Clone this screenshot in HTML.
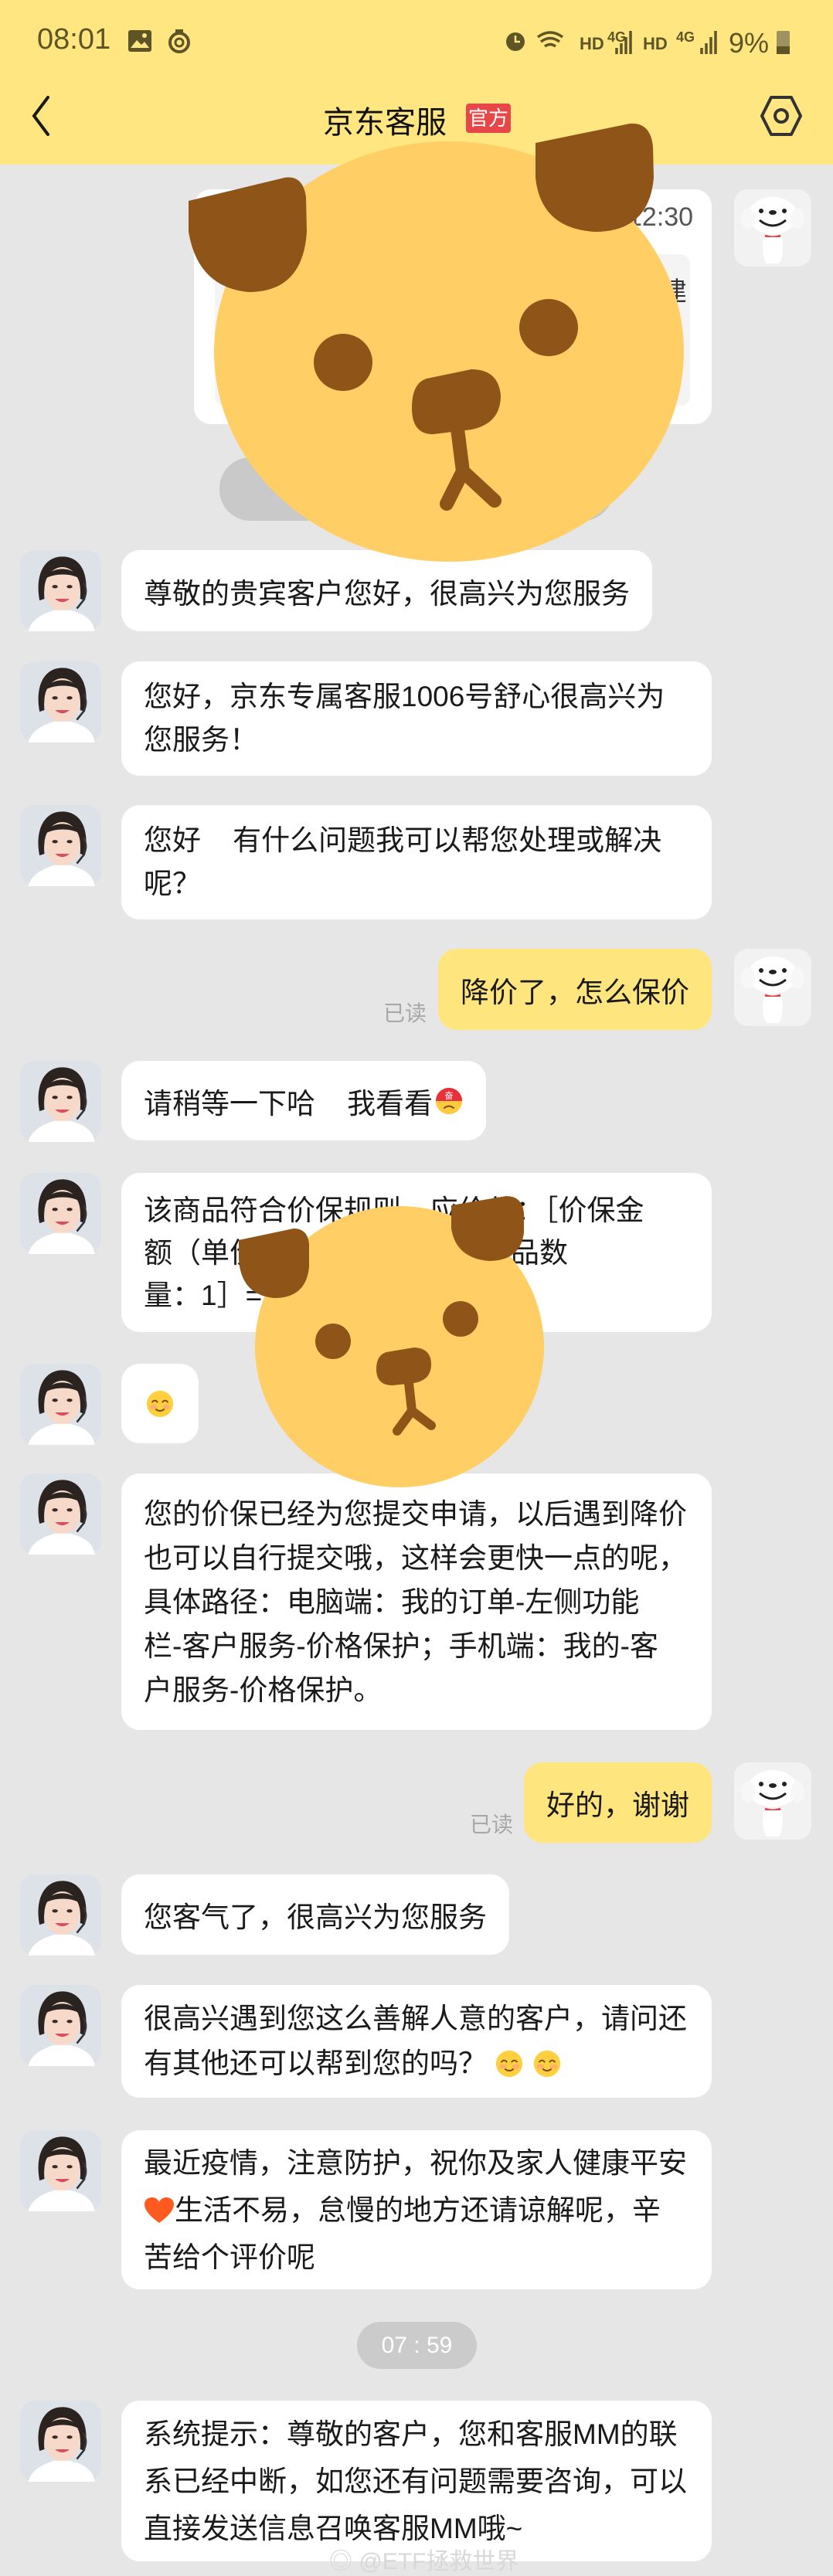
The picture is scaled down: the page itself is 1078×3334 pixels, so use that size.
<!DOCTYPE html>
<html><head><meta charset="utf-8">
<style>
*{margin:0;padding:0;box-sizing:border-box}
body{width:1078px;height:3334px;background:#e6e6e6;position:relative;overflow:hidden;font-family:"Liberation Sans","Noto Sans CJK SC",sans-serif;color:#1a1a1a}
.hdr{position:absolute;left:0;top:0;width:1078px;height:213px;background:#ffe680}
.ab{position:absolute}
.b{position:absolute;background:#fff;border-radius:24px;font-size:37px;padding:0 29px;white-space:pre;display:flex;align-items:center}
.b span{display:block}
.r{background:#ffe57e}
.av{position:absolute;left:26px;width:105px;height:105px}
.jd{position:absolute;left:950px;width:100px;height:100px}
.rd{position:absolute;font-size:28px;color:#a8a8a8}
</style></head><body>
<svg width="0" height="0" style="position:absolute">
<defs>
<symbol id="w" viewBox="0 0 100 100">
<rect x="0" y="0" width="100" height="100" rx="18" fill="#dde1e8"/>
<path d="M24 62 C18 30 30 8 52 8 C74 8 86 28 80 62 L74 60 C76 40 70 26 52 26 C34 26 28 40 30 60Z" fill="#2a2320"/>
<ellipse cx="52" cy="48" rx="22" ry="27" fill="#f6d9c8"/>
<path d="M30 36 C36 20 66 18 74 36 C66 28 40 28 30 36Z" fill="#2a2320"/>
<ellipse cx="43" cy="45" rx="3.5" ry="2" fill="#3a2a25"/><ellipse cx="61" cy="45" rx="3.5" ry="2" fill="#3a2a25"/>
<path d="M43 60 Q52 68 61 60 Z" fill="#d8505e"/>
<path d="M78 40 Q84 50 78 62 L70 72" stroke="#333" stroke-width="2.5" fill="none"/>
<path d="M10 100 C14 84 30 78 42 74 L62 74 C76 78 90 84 92 100Z" fill="#fff"/>
</symbol>
<symbol id="j" viewBox="0 0 100 100">
<rect x="0" y="0" width="100" height="100" rx="18" fill="#f2f2f2"/>
<ellipse cx="50" cy="34" rx="32" ry="24" fill="#fff"/>
<ellipse cx="18" cy="38" rx="9" ry="14" fill="#f7f7f7"/><ellipse cx="82" cy="38" rx="9" ry="14" fill="#f7f7f7"/>
<circle cx="35" cy="28" r="3" fill="#222"/><circle cx="65" cy="28" r="3" fill="#222"/>
<ellipse cx="50" cy="30" rx="5" ry="3" fill="#222"/>
<path d="M33 40 Q50 54 67 40" stroke="#222" stroke-width="3" fill="none"/>
<path d="M40 60 Q50 64 60 60" stroke="#e0414b" stroke-width="3" fill="none"/>
<path d="M38 62 C36 80 38 96 44 96 L56 96 C62 96 64 80 62 62Z" fill="#fff"/>
</symbol>
<symbol id="sm" viewBox="0 0 40 40">
<circle cx="20" cy="20" r="18" fill="#ffcf3f"/><ellipse cx="11" cy="24" rx="5" ry="3" fill="#ff9a8a" opacity=".6"/><ellipse cx="29" cy="24" rx="5" ry="3" fill="#ff9a8a" opacity=".6"/>
<path d="M9 18 Q13 13 17 18 M23 18 Q27 13 31 18" stroke="#7a4a14" stroke-width="2" fill="none"/>
<path d="M14 27 Q20 32 26 27" stroke="#7a4a14" stroke-width="2" fill="none"/>
</symbol>
</defs></svg>

<div class="hdr"></div>
<div class="ab" style="left:48px;top:30px;font-size:38px;color:#5e5527">08:01</div>
<svg class="ab" style="left:165px;top:38px" width="32" height="30"><rect x="1" y="1" width="30" height="28" rx="3" fill="#5e5527"/><path d="M4 24 L12 14 L18 20 L22 16 L28 24Z" fill="#ffe680"/><circle cx="22" cy="8" r="3" fill="#ffe680"/></svg>
<svg class="ab" style="left:215px;top:36px" width="34" height="34"><circle cx="17" cy="19" r="12" stroke="#5e5527" stroke-width="4" fill="none"/><circle cx="17" cy="19" r="5" stroke="#5e5527" stroke-width="3" fill="none"/><path d="M12 4 L22 4" stroke="#5e5527" stroke-width="4"/></svg>
<svg class="ab" style="left:650px;top:34px" width="380" height="38">
<circle cx="17" cy="20" r="12" fill="#5e5527"/><path d="M17 12 V20 H23" stroke="#ffe680" stroke-width="2.5" fill="none"/>
<path d="M46 14 Q62 2 78 14 M50 20 Q62 11 74 20 M55 26 Q62 21 69 26" stroke="#5e5527" stroke-width="3.5" fill="none"/>
<text x="100" y="30" font-size="22" font-weight="bold" fill="#5e5527" font-family="Liberation Sans">HD</text>
<text x="136" y="20" font-size="18" font-weight="bold" fill="#5e5527" font-family="Liberation Sans">4G</text>
<path d="M148 36 V28 M154 36 V22 M160 36 V14 M166 36 V6" stroke="#5e5527" stroke-width="3.5"/>
<text x="182" y="30" font-size="22" font-weight="bold" fill="#5e5527" font-family="Liberation Sans">HD</text>
<text x="225" y="20" font-size="18" font-weight="bold" fill="#5e5527" font-family="Liberation Sans">4G</text>
<path d="M258 36 V28 M264 36 V22 M270 36 V14 M276 36 V6" stroke="#5e5527" stroke-width="3.5"/>
<text x="293" y="34" font-size="36" fill="#5e5527" font-family="Liberation Sans">9%</text>
<rect x="355" y="6" width="17" height="30" rx="2" fill="#9c9360"/><rect x="355" y="26" width="17" height="10" fill="#5e5527"/>
</svg>
<svg class="ab" style="left:36px;top:122px" width="32" height="56"><path d="M26 4 L8 28 L26 52" stroke="#1a1a1a" stroke-width="4" fill="none" stroke-linecap="round"/></svg>
<div class="ab" style="left:418px;top:126px;font-size:40px;color:#111">京东客服</div>
<div class="ab" style="left:603px;top:134px;width:58px;height:38px;background:#e8474a;border-radius:4px;color:#fff;font-size:26px;line-height:38px;text-align:center">官方</div>
<svg class="ab" style="left:982px;top:122px" width="58" height="56"><path d="M16 4 H42 L54 28 L42 52 H16 L4 28Z" stroke="#333" stroke-width="4" fill="none" stroke-linejoin="round"/><circle cx="29" cy="28" r="8" stroke="#333" stroke-width="4" fill="none"/></svg>

<!-- product card -->
<div class="ab" style="left:251px;top:245px;width:670px;height:304px;background:#fff;border-radius:22px"></div>
<div class="ab" style="left:278px;top:329px;width:615px;height:196px;background:#f4f4f4;border-radius:12px"></div>
<div class="ab" style="left:812px;top:262px;font-size:34px;color:#555">12:30</div>
<div class="ab" style="left:855px;top:350px;font-size:34px;color:#333">建</div>
<svg class="jd" style="top:245px"><use href="#j"/></svg>
<div class="ab" style="left:284px;top:592px;width:510px;height:82px;background:#c9c9c9;border-radius:40px"></div>

<svg class="av" style="top:712px"><use href="#w"/></svg>
<div class="b" style="left:157px;top:712px;height:105px">尊敬的贵宾客户您好，很高兴为您服务</div>
<svg class="av" style="top:856px"><use href="#w"/></svg>
<div class="b" style="left:157px;top:856px;height:148px;width:764px;line-height:56px">您好，京东专属客服1006号舒心很高兴为
您服务！</div>
<svg class="av" style="top:1042px"><use href="#w"/></svg>
<div class="b" style="left:157px;top:1042px;height:148px;width:764px;line-height:56px">您好    有什么问题我可以帮您处理或解决
呢？</div>
<div class="rd" style="left:496px;top:1290px">已读</div>
<div class="b r" style="right:157px;top:1228px;height:105px">降价了，怎么保价</div>
<svg class="jd" style="top:1228px"><use href="#j"/></svg>

<svg class="av" style="top:1373px"><use href="#w"/></svg>
<div class="b" style="left:157px;top:1373px;height:103px">请稍等一下哈    我看看<svg width="38" height="38" viewBox="0 0 40 40" style="margin-left:2px"><circle cx="20" cy="20" r="18" fill="#ffc940"/><path d="M2 20 A18 18 0 0 1 38 20Z" fill="#e8303a"/><text x="20" y="17" font-size="12" fill="#fff" text-anchor="middle" font-family="Noto Sans CJK SC">奋</text><path d="M13 30 Q20 24 27 30" stroke="#7a4a14" stroke-width="2" fill="none"/></svg></div>
<svg class="av" style="top:1518px"><use href="#w"/></svg>
<div class="b" style="left:157px;top:1518px;height:206px;width:764px;line-height:55px">该商品符合价保规则，应价保：［价保金
额（单价）：100.00 ，价保商品数
量：1］=100.00</div>
<svg class="av" style="top:1765px"><use href="#w"/></svg>
<div class="b" style="left:157px;top:1765px;height:103px;width:100px;padding:0 0 0 31px"><svg width="38" height="38"><use href="#sm"/></svg></div>
<svg class="av" style="top:1907px"><use href="#w"/></svg>
<div class="b" style="left:157px;top:1907px;height:332px;width:764px;line-height:57px">您的价保已经为您提交申请，以后遇到降价
也可以自行提交哦，这样会更快一点的呢，
具体路径：电脑端：我的订单-左侧功能
栏-客户服务-价格保护；手机端：我的-客
户服务-价格保护。</div>
<div class="rd" style="left:608px;top:2340px">已读</div>
<div class="b r" style="right:157px;top:2281px;height:104px">好的，谢谢</div>
<svg class="jd" style="top:2281px"><use href="#j"/></svg>
<svg class="av" style="top:2426px"><use href="#w"/></svg>
<div class="b" style="left:157px;top:2426px;height:104px">您客气了，很高兴为您服务</div>
<svg class="av" style="top:2569px"><use href="#w"/></svg>
<div class="b" style="left:157px;top:2569px;height:146px;width:764px;line-height:58px"><span>很高兴遇到您这么善解人意的客户，请问还
有其他还可以帮到您的吗？ <svg width="38" height="38" style="vertical-align:-7px"><use href="#sm"/></svg> <svg width="38" height="38" style="vertical-align:-7px"><use href="#sm"/></svg></span></div>
<svg class="av" style="top:2757px"><use href="#w"/></svg>
<div class="b" style="left:157px;top:2757px;height:206px;width:764px;line-height:61px"><span>最近疫情，注意防护，祝你及家人健康平安
<svg width="40" height="36" viewBox="0 0 40 36" style="vertical-align:-6px"><path d="M20 34 C6 24 1 16 1 10 C1 4 6 1 11 1 C15 1 18 3 20 7 C22 3 25 1 29 1 C34 1 39 4 39 10 C39 16 34 24 20 34Z" fill="#ff5a1f"/></svg>生活不易，怠慢的地方还请谅解呢，辛
苦给个评价呢</span></div>
<div class="ab" style="left:462px;top:3005px;width:155px;height:61px;background:#cbcbcb;border-radius:31px;color:#fff;font-size:30px;line-height:61px;text-align:center">07 : 59</div>
<svg class="av" style="top:3107px"><use href="#w"/></svg>
<div class="b" style="left:157px;top:3107px;height:208px;width:764px;line-height:61px">系统提示：尊敬的客户，您和客服MM的联
系已经中断，如您还有问题需要咨询，可以
直接发送信息召唤客服MM哦~</div>
<div class="ab" style="left:426px;top:3290px;font-size:30px;color:#d8d8d8">◎ @ETF拯救世界</div>

<!-- dog overlays -->
<svg class="ab" style="left:0;top:0" width="1078" height="2000">
<g fill="#8e5418">
<ellipse cx="581" cy="455" rx="304" ry="272" fill="#ffce65"/>
<path d="M244 260 L368 230 Q392 226 396 255 L397 300 Q392 378 322 378 Q256 372 244 300Z"/>
<path d="M693 185 L815 160 Q842 158 845 190 L846 230 Q840 300 770 300 Q700 296 693 230Z"/>
<ellipse cx="444" cy="469" rx="38" ry="37"/>
<ellipse cx="710" cy="424" rx="38" ry="37"/>
<path d="M552 490 L610 478 Q645 478 648 512 Q648 548 610 556 L560 562 Q533 562 533 528 Q533 496 552 490Z"/>
</g>
<path d="M592 555 L599 610 M599 610 L578 652 M599 610 L640 648" stroke="#8e5418" stroke-width="18" stroke-linecap="round" fill="none"/>
<g fill="#8e5418">
<ellipse cx="517" cy="1743" rx="187" ry="182" fill="#ffce65"/>
<path d="M309 1605 L380 1590 Q398 1590 400 1610 L400 1640 Q396 1680 355 1680 Q312 1676 309 1630Z"/>
<path d="M584 1560 L655 1548 Q676 1548 678 1570 L678 1595 Q674 1632 632 1632 Q590 1628 584 1590Z"/>
<ellipse cx="431" cy="1736" rx="23" ry="23"/>
<ellipse cx="596" cy="1707" rx="23" ry="23"/>
<path d="M500 1750 L536 1744 Q558 1745 558 1766 Q558 1786 536 1790 L508 1793 Q487 1793 487 1772 Q487 1754 500 1750Z"/>
</g>
<path d="M529 1790 L533 1826 M533 1826 L514 1852 M533 1826 L558 1845" stroke="#8e5418" stroke-width="12" stroke-linecap="round" fill="none"/>
</svg>
</body></html>
